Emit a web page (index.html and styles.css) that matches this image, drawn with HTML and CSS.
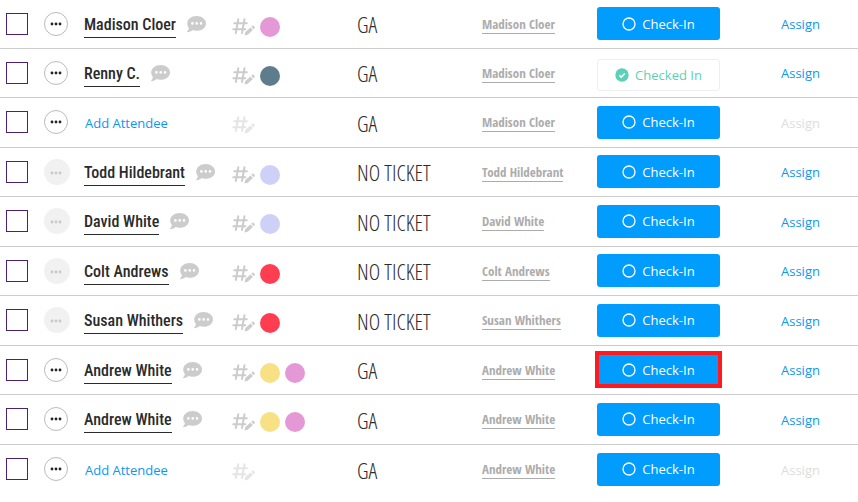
FILE: index.html
```html
<!DOCTYPE html>
<html lang="en">
<head>
  <meta charset="UTF-8" />
  <meta name="viewport" content="width=device-width, initial-scale=1.0"/>
  <title>Attendees</title>
  <link rel="stylesheet" href="styles.css">
</head>
<body>
  <!-- shared icons -->
  <svg class="sprite" aria-hidden="true">
    <symbol id="dots" viewBox="0 0 12 4">
      <circle cx="2" cy="2" r="1.4"/><circle cx="6" cy="2" r="1.4"/><circle cx="10" cy="2" r="1.4"/>
    </symbol>
    <symbol id="comment" viewBox="0 0 19 17">
      <path fill-rule="evenodd" d="M9.600 0C14.800 0 19 3.300 19 7.400s-4.200 7.400-9.400 7.400c-1.500 0-2.900-.3-4.100-.8C4.200 15.300 2.300 16.200.5 16.200c-.5 0-.6-.5-.3-.8.8-.9 1.500-2.200 1.700-3.500C.9 10.600.2 9.100.2 7.400.2 3.300 4.400 0 9.600 0zM5.400 6.100a1.300 1.300 0 100 2.600 1.300 1.300 0 000-2.600zm4.300 0a1.300 1.300 0 100 2.600 1.300 1.300 0 000-2.600zm4.300 0a1.300 1.300 0 100 2.600 1.300 1.300 0 000-2.600z"/>
    </symbol>
    <symbol id="tag" viewBox="0 0 23 18">
      <path d="M6.300 1.300 3.800 15M12.500 1.300 10 15M2.300 5.300h12.500M1.300 11.200h12" fill="none" stroke="currentColor" stroke-width="2" stroke-linecap="round"/>
      <path d="M12.500 17.500l.8-3.400 5.200-4.700 2.400 2.500-5.200 4.900zM19.300 8.700l.9-.8c.5-.4 1-.4 1.500.1l.9.9c.4.5.4 1-.1 1.500l-.8.8z"/>
    </symbol>
    <symbol id="ring" viewBox="0 0 14 14">
      <circle cx="7" cy="7" r="6" fill="none" stroke="currentColor" stroke-width="1.300"/>
    </symbol>
    <symbol id="done" viewBox="0 0 14 14">
      <circle cx="7" cy="7" r="6.700"/>
      <path d="M4.300 7.200l1.900 1.900 3.600-3.700" fill="none" stroke="#fff" stroke-width="1.500"/>
    </symbol>
  </svg>

  <table class="attendees">
    <colgroup>
      <col class="col-select"><col class="col-menu"><col class="col-name"><col class="col-tags">
      <col class="col-ticket"><col class="col-buyer"><col class="col-status"><col class="col-assign">
    </colgroup>
    <tbody>
      <tr>
        <td><input type="checkbox" class="select" aria-label="Select Madison Cloer"></td>
        <td><button class="more" aria-label="More"><svg><use href="#dots"/></svg></button></td>
        <td><div class="person"><a href="#" class="name">Madison Cloer</a><svg class="comment"><use href="#comment"/></svg></div></td>
        <td><div class="tags"><svg class="tag"><use href="#tag"/></svg><span class="dot pink"></span></div></td>
        <td class="ticket">GA</td>
        <td><a href="#" class="buyer">Madison Cloer</a></td>
        <td><button class="check-in"><svg><use href="#ring"/></svg>Check-In</button></td>
        <td class="assign"><a href="#" class="link">Assign</a></td>
      </tr>
      <tr>
        <td><input type="checkbox" class="select" aria-label="Select Renny C."></td>
        <td><button class="more" aria-label="More"><svg><use href="#dots"/></svg></button></td>
        <td><div class="person"><a href="#" class="name">Renny C.</a><svg class="comment"><use href="#comment"/></svg></div></td>
        <td><div class="tags"><svg class="tag"><use href="#tag"/></svg><span class="dot slate"></span></div></td>
        <td class="ticket">GA</td>
        <td><a href="#" class="buyer">Madison Cloer</a></td>
        <td class="done"><button class="check-in checked"><svg><use href="#done"/></svg>Checked In</button></td>
        <td class="assign"><a href="#" class="link">Assign</a></td>
      </tr>
      <tr>
        <td><input type="checkbox" class="select" aria-label="Select empty ticket"></td>
        <td><button class="more" aria-label="More"><svg><use href="#dots"/></svg></button></td>
        <td><a href="#" class="link add">Add Attendee</a></td>
        <td><div class="tags faded"><svg class="tag"><use href="#tag"/></svg></div></td>
        <td class="ticket">GA</td>
        <td><a href="#" class="buyer">Madison Cloer</a></td>
        <td><button class="check-in"><svg><use href="#ring"/></svg>Check-In</button></td>
        <td class="assign"><a class="link off">Assign</a></td>
      </tr>
      <tr>
        <td><input type="checkbox" class="select" aria-label="Select Todd Hildebrant"></td>
        <td><button class="more" aria-label="More" disabled><svg><use href="#dots"/></svg></button></td>
        <td><div class="person"><a href="#" class="name">Todd Hildebrant</a><svg class="comment"><use href="#comment"/></svg></div></td>
        <td><div class="tags"><svg class="tag"><use href="#tag"/></svg><span class="dot lavender"></span></div></td>
        <td class="ticket">NO TICKET</td>
        <td><a href="#" class="buyer">Todd Hildebrant</a></td>
        <td><button class="check-in"><svg><use href="#ring"/></svg>Check-In</button></td>
        <td class="assign"><a href="#" class="link">Assign</a></td>
      </tr>
      <tr>
        <td><input type="checkbox" class="select" aria-label="Select David White"></td>
        <td><button class="more" aria-label="More" disabled><svg><use href="#dots"/></svg></button></td>
        <td><div class="person"><a href="#" class="name">David White</a><svg class="comment"><use href="#comment"/></svg></div></td>
        <td><div class="tags"><svg class="tag"><use href="#tag"/></svg><span class="dot lavender"></span></div></td>
        <td class="ticket">NO TICKET</td>
        <td><a href="#" class="buyer">David White</a></td>
        <td><button class="check-in"><svg><use href="#ring"/></svg>Check-In</button></td>
        <td class="assign"><a href="#" class="link">Assign</a></td>
      </tr>
      <tr>
        <td><input type="checkbox" class="select" aria-label="Select Colt Andrews"></td>
        <td><button class="more" aria-label="More" disabled><svg><use href="#dots"/></svg></button></td>
        <td><div class="person"><a href="#" class="name">Colt Andrews</a><svg class="comment"><use href="#comment"/></svg></div></td>
        <td><div class="tags"><svg class="tag"><use href="#tag"/></svg><span class="dot red"></span></div></td>
        <td class="ticket">NO TICKET</td>
        <td><a href="#" class="buyer">Colt Andrews</a></td>
        <td><button class="check-in"><svg><use href="#ring"/></svg>Check-In</button></td>
        <td class="assign"><a href="#" class="link">Assign</a></td>
      </tr>
      <tr>
        <td><input type="checkbox" class="select" aria-label="Select Susan Whithers"></td>
        <td><button class="more" aria-label="More" disabled><svg><use href="#dots"/></svg></button></td>
        <td><div class="person"><a href="#" class="name">Susan Whithers</a><svg class="comment"><use href="#comment"/></svg></div></td>
        <td><div class="tags"><svg class="tag"><use href="#tag"/></svg><span class="dot red"></span></div></td>
        <td class="ticket">NO TICKET</td>
        <td><a href="#" class="buyer">Susan Whithers</a></td>
        <td><button class="check-in"><svg><use href="#ring"/></svg>Check-In</button></td>
        <td class="assign"><a href="#" class="link">Assign</a></td>
      </tr>
      <tr>
        <td><input type="checkbox" class="select" aria-label="Select Andrew White"></td>
        <td><button class="more" aria-label="More"><svg><use href="#dots"/></svg></button></td>
        <td><div class="person"><a href="#" class="name">Andrew White</a><svg class="comment"><use href="#comment"/></svg></div></td>
        <td><div class="tags"><svg class="tag"><use href="#tag"/></svg><span class="dot yellow"></span><span class="dot pink"></span></div></td>
        <td class="ticket">GA</td>
        <td><a href="#" class="buyer">Andrew White</a></td>
        <td><button class="check-in highlight"><svg><use href="#ring"/></svg>Check-In</button></td>
        <td class="assign"><a href="#" class="link">Assign</a></td>
      </tr>
      <tr>
        <td><input type="checkbox" class="select" aria-label="Select Andrew White, second ticket"></td>
        <td><button class="more" aria-label="More"><svg><use href="#dots"/></svg></button></td>
        <td><div class="person"><a href="#" class="name">Andrew White</a><svg class="comment"><use href="#comment"/></svg></div></td>
        <td><div class="tags"><svg class="tag"><use href="#tag"/></svg><span class="dot yellow"></span><span class="dot pink"></span></div></td>
        <td class="ticket">GA</td>
        <td><a href="#" class="buyer">Andrew White</a></td>
        <td><button class="check-in"><svg><use href="#ring"/></svg>Check-In</button></td>
        <td class="assign"><a href="#" class="link">Assign</a></td>
      </tr>
      <tr>
        <td><input type="checkbox" class="select" aria-label="Select empty ticket"></td>
        <td><button class="more" aria-label="More"><svg><use href="#dots"/></svg></button></td>
        <td><a href="#" class="link add">Add Attendee</a></td>
        <td><div class="tags faded"><svg class="tag"><use href="#tag"/></svg></div></td>
        <td class="ticket">GA</td>
        <td><a href="#" class="buyer">Andrew White</a></td>
        <td><button class="check-in"><svg><use href="#ring"/></svg>Check-In</button></td>
        <td class="assign"><a class="link off">Assign</a></td>
      </tr>
    </tbody>
  </table>
</body>
</html>
```
FILE: styles.css
```css
* {
  box-sizing: border-box;
}
body {
  margin: 0;
  background: #fff;
  font-family: "Open Sans", sans-serif;
  font-size: 13px;
  color: #2b2b2b;
}
.sprite {
  display: none;
}
svg {
  display: block;
  flex: none;
  fill: currentColor;
}
.attendees {
  width: 100%;
  table-layout: fixed;
  border-collapse: separate;
  border-spacing: 0;
}
.col-select { width: 44px; }
.col-menu { width: 40px; }
.col-name { width: 148px; }
.col-tags { width: 125px; }
.col-ticket { width: 125px; }
.col-buyer { width: 115px; }
.col-status { width: 123px; }
.col-assign { width: 138px; }

td {
  height: 49px;
  padding: 0;
  border-bottom: 1px solid #ccc;
  vertical-align: middle;
  white-space: nowrap;
}
tr:nth-child(odd) td {
  height: 50px;
}
tr:first-child td {
  height: 49px;
}
tr:last-child td {
  border-bottom: 0;
}

.select {
  display: block;
  appearance: none;
  width: 22px;
  height: 22px;
  margin: 0 0 1px 6px;
  border: 1px solid #4a2178;
  background: #fff;
}
.more {
  display: flex;
  align-items: center;
  justify-content: center;
  width: 24px;
  height: 24px;
  margin-bottom: 1px;
  padding: 0;
  border: 1px solid #bbb;
  border-radius: 50%;
  background: #fff;
  color: #222;
}
.more svg {
  width: 12px;
  height: 4px;
}
.more:disabled {
  width: 26px;
  height: 26px;
  padding: 2px 2px 0 0;
  border: 0;
  background: #f1f1f1;
  color: #c8c8c8;
}

.person {
  display: flex;
  align-items: center;
  gap: 11px;
}
.name {
  margin-top: 1px;
  border-bottom: 1px solid #2b2b2b;
  font-family: "Roboto Condensed", Roboto, sans-serif;
  font-size: 16px;
  font-weight: 500;
  line-height: 25px;
  color: #2b2b2b;
  text-decoration: none;
}
.comment {
  width: 19px;
  height: 17px;
  color: #ccc;
}

.tags {
  display: flex;
  align-items: center;
  gap: 5px;
  padding-top: 5px;
}
.tag {
  width: 23px;
  height: 18px;
  color: #ccc;
}
.faded {
  opacity: 0.5;
}
.dot {
  width: 20px;
  height: 20px;
  border-radius: 50%;
}
.pink { background: #e598d6; }
.slate { background: #5e7d8c; }
.lavender { background: #cdd1f7; }
.red { background: #ff3d51; }
.yellow { background: #f7e184; }

.ticket {
  font-family: "Open Sans Condensed Light", "Roboto Condensed", sans-serif;
  font-size: 22px;
  font-weight: 300;
  line-height: 30px;
}
.buyer {
  display: inline-block;
  border-bottom: 1px solid #acacac;
  font-family: "Open Sans Condensed", "Roboto Condensed", sans-serif;
  font-size: 13px;
  line-height: 18px;
  color: #acacac;
  text-decoration: none;
}

.check-in {
  display: flex;
  align-items: center;
  justify-content: center;
  gap: 6px;
  width: 100%;
  height: 33px;
  margin-bottom: 1px;
  padding: 0;
  border: 0;
  border-radius: 3px;
  background: #009dff;
  font-family: inherit;
  font-size: 13px;
  font-weight: 500;
  color: #fff;
}
.check-in svg {
  width: 14px;
  height: 14px;
}
.checked {
  height: 32px;
  border: 1px solid #eee;
  background: #fff;
  font-weight: 400;
  color: #5bd1b7;
}
.done {
  padding-top: 4px;
}
.highlight {
  border-radius: 0;
  outline: 4px solid #ff1a1f;
  outline-offset: -2px;
}

.link {
  color: #0a98f5;
  text-decoration: none;
}
.add {
  padding-left: 1px;
}
.assign {
  padding-left: 61px;
}
.off {
  color: #ddd;
}
```
